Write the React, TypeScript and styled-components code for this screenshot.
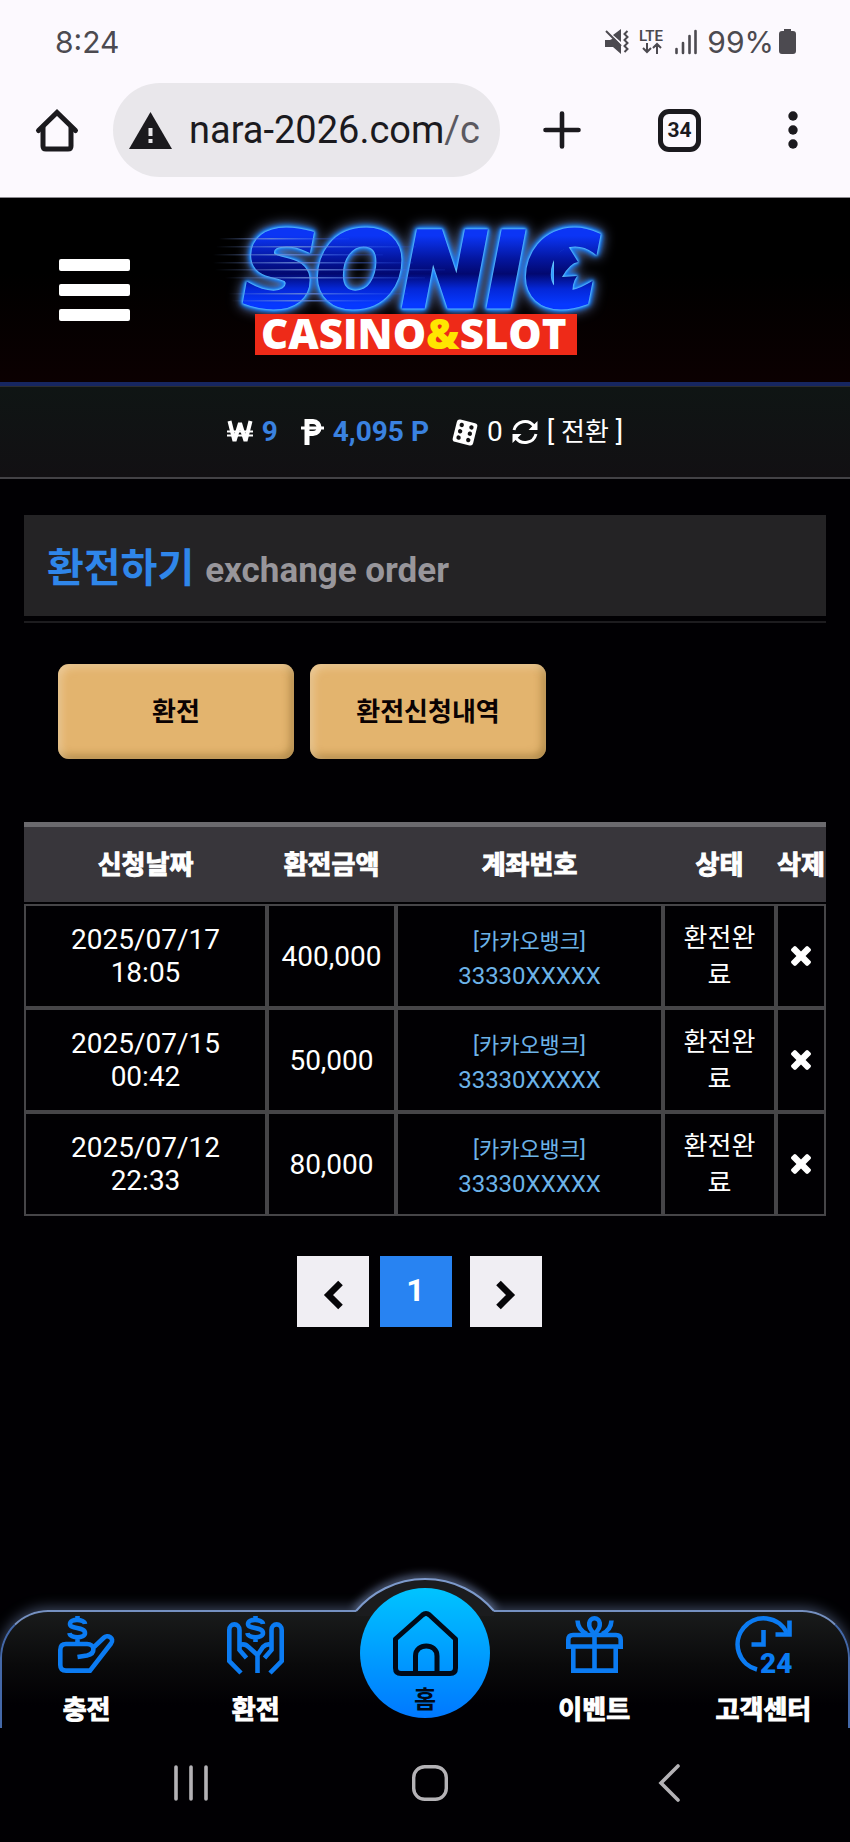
import React from "react";
import styled, { createGlobalStyle } from "styled-components";

const GlobalStyle = createGlobalStyle`
  * { box-sizing: border-box; }
  body {
    margin: 0;
    background: #010003;
    color: #fff;
    font-family: Roboto, "Noto Sans CJK KR", sans-serif;
  }
  button {
    margin: 0;
    padding: 0;
    border: 0;
    background: none;
    color: inherit;
    font: inherit;
    cursor: pointer;
  }
  a { color: inherit; text-decoration: none; }
  svg { display: block; flex: none; overflow: visible; }
`;

const Page = styled.div`
  display: flex;
  flex-direction: column;
  min-height: 100vh;
`;

/* Phone status bar and browser toolbar */

const BrowserTop = styled.header`
  background: #fcf9fe;
  border-bottom: 1px solid #8d8b90;
  color: #1b1a1e;
`;

const StatusBar = styled.div`
  display: flex;
  align-items: center;
  justify-content: space-between;
  height: 83px;
  padding: 0 54px 0 55px;
  color: #4c4a50;
  font-family: Inter, Roboto, sans-serif;
  font-size: 30px;
  line-height: 36px;
`;

const StatusIcons = styled.div`
  display: flex;
  align-items: center;
  gap: 10px;
`;

const BatteryStatus = styled.div`
  display: flex;
  align-items: center;
  gap: 5px;
`;

const Toolbar = styled.div`
  display: flex;
  align-items: center;
  padding-bottom: 20px;
`;

const ToolButton = styled.button<{ $width: number }>`
  display: flex;
  align-items: center;
  justify-content: center;
  flex: none;
  width: ${(p) => p.$width}px;
  height: 94px;
`;

const AddressBar = styled.button`
  display: flex;
  align-items: center;
  gap: 17px;
  flex: 1;
  min-width: 0;
  height: 94px;
  padding: 0 16px;
  border-radius: 47px;
  background: #e9e7eb;
  font-size: 38px;
  line-height: 46px;
  white-space: nowrap;
`;

const UrlPath = styled.span`
  color: #5b5960;
`;

const TabCount = styled.span`
  display: flex;
  align-items: center;
  justify-content: center;
  width: 43px;
  height: 43px;
  border: 5px solid #1b1a1e;
  border-radius: 11px;
  font-size: 21px;
  font-weight: 700;
  line-height: 24px;
`;

/* Site header */

const SiteHeader = styled.div`
  display: grid;
  grid-template-columns: 1fr 420px 1fr;
  align-items: center;
  height: 188px;
  border-bottom: 4px solid #162660;
  background: linear-gradient(#000 40%, #0b0001);
`;

const MenuButton = styled.button`
  display: flex;
  flex-direction: column;
  gap: 13px;
  width: 71px;
  margin-left: 59px;
`;

const MenuLine = styled.span`
  height: 12px;
  border-radius: 2px;
  background: #fff;
`;

const NeonGroup = styled.g`
  filter: drop-shadow(0 0 1px #7fd8ff) drop-shadow(0 0 1px #4fb8ff)
    drop-shadow(0 0 2px #0a78ff) drop-shadow(0 0 2px #0a6cf0)
    drop-shadow(0 0 6px rgba(150, 180, 255, 0.7));
`;

const LogoWord = styled.text`
  font-family: "DejaVu Sans", sans-serif;
  font-size: 101px;
  font-style: italic;
  font-weight: 700;
`;

const InfoBar = styled.div`
  display: flex;
  align-items: center;
  justify-content: center;
  gap: 23px;
  height: 93px;
  border-top: 1px solid #2b2d30;
  border-bottom: 2px solid #434246;
  background: linear-gradient(#0f1514, #121013);
  font-size: 28px;
  line-height: 34px;
`;

const InfoGroup = styled.div`
  display: flex;
  align-items: center;
  gap: 9px;
`;

const Amount = styled.strong`
  color: #3a82e0;
`;

const ConvertButton = styled.button`
  display: flex;
  align-items: center;
  gap: 9px;
`;

const KoreanText = styled.span`
  font-size: 26px;
`;

/* Main content */

const Main = styled.main`
  flex: 1;
  padding: 36px 24px 48px;
`;

const TitleBlock = styled.div`
  padding-bottom: 5px;
  border-bottom: 2px solid #1d1c1f;
`;

const Title = styled.h1`
  display: flex;
  align-items: baseline;
  gap: 11px;
  height: 101px;
  margin: 0;
  padding: 24px 23px 0;
  background: #242325;
  color: #2f86ea;
  font-size: 40px;
  font-weight: 700;
  line-height: 60px;
`;

const Subtitle = styled.span`
  color: #98969b;
  font-size: 35px;
`;

const ActionRow = styled.div`
  display: flex;
  gap: 16px;
  padding: 41px 34px 63px;
`;

const ActionButton = styled.button`
  width: 236px;
  height: 95px;
  padding-bottom: 4px;
  border-radius: 11px;
  background: #e3b46e;
  box-shadow: inset 3px 3px 8px rgba(255, 235, 205, 0.5),
    inset -3px -3px 8px rgba(110, 80, 20, 0.5);
  color: #0a0203;
  font-size: 26px;
  font-weight: 700;
`;

const HistoryTable = styled.table`
  width: 100%;
  table-layout: fixed;
  border-collapse: separate;
  border-spacing: 0;
  text-align: center;
`;

const Column = styled.col<{ $width?: number }>`
  width: ${(p) => (p.$width ? `${p.$width}px` : "auto")};
`;

const HeadCell = styled.th`
  height: 82px;
  padding: 0 0 4px;
  border-top: 5px solid #6b6a6e;
  border-bottom: 2px solid #010003;
  background: #38363b;
  font-size: 26px;
  font-weight: 700;
  white-space: nowrap;
  -webkit-text-stroke: 1px #fff;
`;

const Cell = styled.td`
  height: 104px;
  padding: 0;
  border: 2px solid #464548;
  font-size: 28px;
  line-height: 33px;
`;

const StateCell = styled(Cell)`
  padding: 2px 14px 0;
  font-size: 26px;
  line-height: 37px;
  word-break: break-all;
`;

const DateText = styled.time`
  display: block;
  width: 160px;
  margin: 0 auto;
`;

const Account = styled.div`
  padding-top: 6px;
  color: #6cb3e8;
  font-size: 24px;
  line-height: 34px;
`;

const Bank = styled.div`
  font-size: 22px;
`;

const DeleteButton = styled.button`
  display: flex;
  align-items: center;
  justify-content: center;
  width: 100%;
  height: 60px;
`;

const Pagination = styled.nav`
  display: flex;
  justify-content: center;
  padding: 40px 12px 0 0;
`;

const PageButton = styled.button<{ $current?: boolean }>`
  display: flex;
  align-items: center;
  justify-content: center;
  width: 72px;
  height: 71px;
  background: ${(p) => (p.$current ? "#2883f2" : "#f0eef3")};
  color: ${(p) => (p.$current ? "#fff" : "#060508")};
  font-size: 32px;
  font-weight: 700;
  line-height: 38px;
  margin: ${(p) => (p.$current ? "0 18px 0 11px" : "0")};
  padding: ${(p) => (p.$current ? "0 0 4px" : "6px 0 0")};
`;

/* Bottom navigation */

const BottomNav = styled.nav`
  position: relative;
  display: grid;
  grid-template-columns: repeat(5, 1fr);
  height: 118px;
  border: 2px solid #4468a8;
  border-top-color: #7590c0;
  border-bottom: 0;
  border-radius: 48px 48px 0 0;
  background: linear-gradient(#191b1b, #0a0a0b 45%, #010003 80%);
  box-shadow: 0 -2px 14px rgba(140, 165, 215, 0.45);
`;

const NavItem = styled.a`
  display: flex;
  flex-direction: column;
  align-items: center;
  gap: 18px;
  padding-top: 4px;
  font-size: 26px;
  font-weight: 700;
  line-height: 38px;
  white-space: nowrap;
  -webkit-text-stroke: 1px #fff;
`;

const Bump = styled.svg`
  position: absolute;
  top: -48px;
  left: 50%;
  margin-left: -90px;
`;

const HomeLink = styled.a`
  position: absolute;
  top: -24px;
  left: 50%;
  display: flex;
  flex-direction: column;
  align-items: center;
  gap: 6px;
  width: 130px;
  height: 130px;
  margin-left: -65px;
  padding-top: 23px;
  border-radius: 50%;
  background: linear-gradient(#00c4ff, #0078ff);
  color: #000a18;
  font-size: 24px;
  font-weight: 700;
  line-height: 36px;
`;

const SystemNav = styled.footer`
  position: relative;
  display: flex;
  justify-content: center;
  gap: 82px;
  height: 114px;
  padding: 27px 0 0 10px;
  background: #010003;
`;

const SystemButton = styled.button`
  display: flex;
  align-items: center;
  justify-content: center;
  width: 157px;
  height: 56px;
`;

const SilentIcon = () => (
  <svg width="25" height="25" viewBox="0 0 25 25" aria-hidden="true">
    <path d="M1 11h5l4-2 7 7v9l-8-7H1Z M9 6l8-6v13z" fill="#4c4a50" />
    <path d="M2 2 17 17" stroke="#4c4a50" strokeWidth="2" />
    <path d="M23.500 2l-3 3 3 3-3 3 3 3-3 3 3 3-3 3" fill="none" stroke="#4c4a50" strokeWidth="2" />
  </svg>
);

const LteIcon = () => (
  <svg width="26" height="27" viewBox="0 0 26 27" aria-label="LTE">
    <text x="0" y="13" fontFamily="Roboto, sans-serif" fontSize="15" fontWeight="600" fill="#4c4a50">LTE</text>
    <path d="M8 15v9M4 20l4 4 4-4M18 26v-9M14 20l4-4 4 4" fill="none" stroke="#4c4a50" strokeWidth="2" />
  </svg>
);

const SignalIcon = () => (
  <svg width="22" height="24" viewBox="0 0 22 24" aria-hidden="true">
    <path d="M1.500 19v4M8 13v10M14.500 6v17M20.500 1v22" stroke="#4c4a50" strokeWidth="2.600" strokeLinecap="round" />
  </svg>
);

const BatteryIcon = () => (
  <svg width="17" height="25" viewBox="0 0 17 25" aria-hidden="true">
    <path d="M5 0h7v2h2q3 0 3 3v17q0 3-3 3H3q-3 0-3-3V5q0-3 3-3h2z" fill="#4c4a50" />
  </svg>
);

const ToolbarHomeIcon = () => (
  <svg width="42" height="43" viewBox="0 0 42 43" fill="none" stroke="#1b1a1e" strokeWidth="5" aria-hidden="true">
    <path d="M2.500 21.500 21 3.500 39.500 21.500" strokeLinecap="round" />
    <path d="M7 18v19q0 3 3 3h22q3 0 3-3V18" />
  </svg>
);

const WarningIcon = () => (
  <svg width="43" height="37" viewBox="0 0 43 37" aria-hidden="true">
    <path d="M21.500 0 43 37H0Z" fill="#1b1a1e" />
    <path d="M21.500 16v8M21.500 27v4" stroke="#e9e7eb" strokeWidth="4" />
  </svg>
);

const PlusIcon = () => (
  <svg width="38" height="38" viewBox="0 0 38 38" aria-hidden="true">
    <path d="M19 2.500v33M2.500 19h33" stroke="#1b1a1e" strokeWidth="4.600" strokeLinecap="round" />
  </svg>
);

const DotsIcon = () => (
  <svg width="10" height="38" viewBox="0 0 10 38" fill="#1b1a1e" aria-hidden="true">
    <circle cx="5" cy="5" r="4.700" />
    <circle cx="5" cy="19" r="4.700" />
    <circle cx="5" cy="33" r="4.700" />
  </svg>
);

const Logo = () => (
  <svg width="420" height="184" viewBox="215 198 420 184" role="img" aria-label="SONIC CASINO&SLOT">
    <defs>
      <linearGradient id="letter" gradientUnits="userSpaceOnUse" x1="0" y1="232" x2="0" y2="308">
        <stop offset="0.05" stopColor="#0b35f5" />
        <stop offset="0.35" stopColor="#0416a0" />
        <stop offset="0.55" stopColor="#020870" />
        <stop offset="0.75" stopColor="#0427d8" />
        <stop offset="0.95" stopColor="#0638ff" />
      </linearGradient>
      <linearGradient id="streak" x1="0" x2="1">
        <stop offset="0" stopColor="#6f8fd8" stopOpacity="0" />
        <stop offset="0.4" stopColor="#6f8fd8" stopOpacity="0.8" />
        <stop offset="1" stopColor="#3060ff" stopOpacity="0.1" />
      </linearGradient>
    </defs>
    <NeonGroup fill="url(#letter)">
      <LogoWord x="244" y="306" stroke="url(#letter)" strokeWidth="5">SONIC</LogoWord>
      <path d="M568 246 578 262Q570 263 562 277L577 276Q571 284 573 296L554 292V256Z" />
    </NeonGroup>
    <g fill="url(#streak)">
      <rect x="219" y="238" width="130" height="1.500" />
      <rect x="216" y="246" width="200" height="1.500" />
      <rect x="213" y="254" width="170" height="1.500" />
      <rect x="213" y="262" width="200" height="1.500" />
      <rect x="215" y="269" width="230" height="1.500" />
      <rect x="225" y="277" width="200" height="1.500" />
      <rect x="228" y="293" width="180" height="1.500" />
      <rect x="231" y="300" width="160" height="1.500" />
    </g>
    <rect x="255" y="314" width="322" height="41" fill="#ee2a18" />
    <text x="261" y="349" fontFamily="'Open Sans', sans-serif" fontWeight="800" fontSize="42" fill="#fff">
      CASINO<tspan fill="#ffe600">&amp;</tspan>SLOT
    </text>
  </svg>
);

const WonIcon = () => (
  <svg width="26" height="22" viewBox="0 0 26 22" fill="none" stroke="#fff" aria-hidden="true">
    <path d="M2.500 0 7.500 20 13 2 18.500 20 23.500 0" strokeWidth="4" strokeLinejoin="bevel" />
    <path d="M0 10.500h26M0 14.500h26" strokeWidth="2" />
  </svg>
);

const PointIcon = () => (
  <svg width="23" height="26" viewBox="0 0 23 26" fill="none" stroke="#fff" aria-hidden="true">
    <path d="M6 26V2.500h6c8 0 8 12 0 12H6" strokeWidth="5" />
    <path d="M0 9h23" strokeWidth="3" />
  </svg>
);

const DiceIcon = () => (
  <svg width="26" height="27" viewBox="0 0 26 27" aria-hidden="true">
    <g transform="rotate(14 13 13.500)">
      <rect x="2.500" y="2" width="21" height="23" rx="3" fill="#fff" />
      <g fill="#121213">
        <circle cx="8" cy="7" r="2.200" />
        <circle cx="8" cy="13.500" r="2.200" />
        <circle cx="8" cy="20" r="2.200" />
        <circle cx="18" cy="7" r="2.200" />
        <circle cx="18" cy="13.500" r="2.200" />
        <circle cx="18" cy="20" r="2.200" />
      </g>
    </g>
  </svg>
);

const RefreshIcon = () => (
  <svg width="26" height="26" viewBox="0 0 26 26" aria-hidden="true">
    <path d="M2 11A11.300 11.300 0 0 1 22 7M24 15A11.300 11.300 0 0 1 4 19" fill="none" stroke="#fff" strokeWidth="3" />
    <path d="M25.500 2v9h-9zM.5 24v-9h9z" fill="#fff" />
  </svg>
);

const CrossIcon = () => (
  <svg width="20" height="20" viewBox="302 366 1188 1188" fill="#fff" aria-hidden="true">
    <path d="M1490 1322q0 40-28 68l-136 136q-28 28-68 28t-68-28l-294-294-294 294q-28 28-68 28t-68-28l-136-136q-28-28-28-68t28-68l294-294-294-294q-28-28-28-68t28-68l136-136q28-28 68-28t68 28l294 294 294-294q28-28 68-28t68 28l136 136q28 28 28 68t-28 68l-294 294 294 294q28 28 28 68z" />
  </svg>
);

const ArrowIcon = ({ next }: { next?: boolean }) => (
  <svg width="20" height="30" viewBox="0 0 20 30" fill="none" stroke="#060508" strokeWidth="6.500" aria-hidden="true">
    <path d={next ? "M2.500 3 14.500 15 2.500 27" : "M17.500 3 5.500 15 17.500 27"} />
  </svg>
);

const NavIcon = ({ label, children }: { label?: string; children: React.ReactNode }) => (
  <svg width="57" height="57" viewBox="0 0 57 57" fill="none" stroke="#0b7bf2" strokeWidth="4.600" aria-label={label}>
    {children}
  </svg>
);

const DepositIcon = () => (
  <NavIcon>
    <path d="M27 8C26.500 3 12 2 12 8C12 13.500 27 10.500 27 17C27 23 12 22.500 11.500 17M19.500 0v4M19.500 21v7" />
    <path d="M19.500 41 29 39.500C38 37.500 37 28 29 28H8Q2.300 28 2.300 34V49Q2.300 54.600 8 54.600H32L53 27.500C57 22 49.500 18 45.500 22L35.500 31.500" />
  </NavIcon>
);

const WithdrawIcon = () => (
  <NavIcon>
    <path d="M36 8C35.500 3 21 2 21 8C21 13.500 36 10.500 36 17C36 23 21 22.500 20.500 17M28.500 0v4M28.500 21v5" />
    <path d="M14 57 2.300 45V14C2.300 6.500 12.500 6.500 12.500 14V34L19.500 42" />
    <path d="M43 57 54.700 45V14C54.700 6.500 44.500 6.500 44.500 14V34L37.500 42" />
    <path d="M12.500 29Q18 27 21.500 31L30.500 39V57M30.500 39 36 31Q40 27 44.500 29" />
  </NavIcon>
);

const GiftIcon = () => (
  <NavIcon>
    <path d="M2.300 33V24Q2.300 19 7 19H50Q54.700 19 54.700 24V33M0 30.500H57M7.300 31V54.600H49.700V31M28.500 19V55" />
    <path d="M28.500 18C20 10 23 2.300 28.500 2.300S37 10 28.500 18M11.500 4.500Q12 14 21 18M45.500 4.500Q45 14 36 18" />
  </NavIcon>
);

const SupportIcon = () => (
  <NavIcon label="24">
    <path d="M22 53.500A26 26 0 1 1 52 17" />
    <path d="M54.500 4.500V18.500H40.500M28.500 14V28.500H16.500" />
    <text x="25" y="57" fontFamily="Roboto, sans-serif" fontWeight="900" fontSize="28" fill="#0b7bf2" stroke="none">24</text>
  </NavIcon>
);

const HomeIcon = () => (
  <svg width="65" height="65" viewBox="0 0 65 65" fill="none" stroke="#000a18" strokeWidth="5" strokeLinejoin="round" aria-hidden="true">
    <path d="M29.500 4Q33 1 36.500 4L62.500 28V57Q62.500 62.500 57 62.500H8Q2.500 62.500 2.500 57V28Z" />
    <path d="M22.500 62V45C22.500 31.500 44 31.500 44 45V62" />
  </svg>
);

const HomeBump = () => (
  <Bump width="180" height="52" viewBox="0 0 180 52" aria-hidden="true">
    <defs>
      <filter id="bumpGlow" x="-20%" y="-40%" width="140%" height="180%">
        <feGaussianBlur stdDeviation="4" />
      </filter>
      <clipPath id="bumpClip">
        <rect width="180" height="46" />
      </clipPath>
    </defs>
    <g clipPath="url(#bumpClip)">
      <path d="M21 47A90.500 90.500 0 0 1 159 47" fill="none" stroke="#8fa9dc" strokeOpacity="0.6" strokeWidth="8" filter="url(#bumpGlow)" />
    </g>
    <path d="M21 47A90.500 90.500 0 0 1 159 47V52H21Z" fill="#1b1c1e" />
    <path d="M21 47A90.500 90.500 0 0 1 159 47" fill="none" stroke="#7d9acb" strokeWidth="2" />
  </Bump>
);

const history = [
  { date: "2025/07/17 18:05", amount: "400,000" },
  { date: "2025/07/15 00:42", amount: "50,000" },
  { date: "2025/07/12 22:33", amount: "80,000" },
];

export default function App() {
  return (
    <Page>
      <GlobalStyle />
      <BrowserTop>
        <StatusBar>
          <span>8:24</span>
          <StatusIcons>
            <SilentIcon />
            <LteIcon />
            <SignalIcon />
            <BatteryStatus>
              <span>99%</span>
              <BatteryIcon />
            </BatteryStatus>
          </StatusIcons>
        </StatusBar>
        <Toolbar>
          <ToolButton $width={113} aria-label="Home"><ToolbarHomeIcon /></ToolButton>
          <AddressBar>
            <WarningIcon />
            <span>nara-2026.com<UrlPath>/c</UrlPath></span>
          </AddressBar>
          <ToolButton $width={124} aria-label="New tab"><PlusIcon /></ToolButton>
          <ToolButton $width={111} aria-label="Tabs"><TabCount>34</TabCount></ToolButton>
          <ToolButton $width={115} aria-label="More"><DotsIcon /></ToolButton>
        </Toolbar>
      </BrowserTop>

      <SiteHeader>
        <MenuButton aria-label="Menu">
          <MenuLine />
          <MenuLine />
          <MenuLine />
        </MenuButton>
        <Logo />
      </SiteHeader>

      <InfoBar>
        <InfoGroup><WonIcon /><Amount>9</Amount></InfoGroup>
        <InfoGroup><PointIcon /><Amount>4,095 P</Amount></InfoGroup>
        <InfoGroup>
          <DiceIcon />
          <span>0</span>
          <ConvertButton>
            <RefreshIcon />
            <span>[ <KoreanText>전환</KoreanText> ]</span>
          </ConvertButton>
        </InfoGroup>
      </InfoBar>

      <Main>
        <TitleBlock>
          <Title>환전하기<Subtitle>exchange order</Subtitle></Title>
        </TitleBlock>
        <ActionRow>
          <ActionButton>환전</ActionButton>
          <ActionButton>환전신청내역</ActionButton>
        </ActionRow>

        <HistoryTable>
          <colgroup>
            <Column $width={243} />
            <Column $width={129} />
            <Column />
            <Column $width={113} />
            <Column $width={50} />
          </colgroup>
          <thead>
            <tr>
              <HeadCell>신청날짜</HeadCell>
              <HeadCell>환전금액</HeadCell>
              <HeadCell>계좌번호</HeadCell>
              <HeadCell>상태</HeadCell>
              <HeadCell>삭제</HeadCell>
            </tr>
          </thead>
          <tbody>
            {history.map((row) => (
              <tr key={row.date}>
                <Cell><DateText>{row.date}</DateText></Cell>
                <Cell>{row.amount}</Cell>
                <Cell>
                  <Account>
                    <Bank>[카카오뱅크]</Bank>
                    33330XXXXX
                  </Account>
                </Cell>
                <StateCell>환전완료</StateCell>
                <Cell><DeleteButton aria-label="삭제"><CrossIcon /></DeleteButton></Cell>
              </tr>
            ))}
          </tbody>
        </HistoryTable>

        <Pagination>
          <PageButton aria-label="이전"><ArrowIcon /></PageButton>
          <PageButton $current aria-current="page">1</PageButton>
          <PageButton aria-label="다음"><ArrowIcon next /></PageButton>
        </Pagination>
      </Main>

      <BottomNav>
        <NavItem href="#deposit"><DepositIcon />충전</NavItem>
        <NavItem href="#withdraw"><WithdrawIcon />환전</NavItem>
        <span />
        <NavItem href="#event"><GiftIcon />이벤트</NavItem>
        <NavItem href="#support"><SupportIcon />고객센터</NavItem>
        <HomeBump />
        <HomeLink href="#home"><HomeIcon />홈</HomeLink>
      </BottomNav>

      <SystemNav>
        <SystemButton aria-label="Recent apps">
          <svg width="36" height="36" viewBox="0 0 36 36">
            <path d="M3 2v32M18 2v32M33 2v32" stroke="#b4b2b6" strokeWidth="3.600" strokeLinecap="round" />
          </svg>
        </SystemButton>
        <SystemButton aria-label="Home screen">
          <svg width="36" height="36" viewBox="0 0 36 36">
            <rect x="1.700" y="1.700" width="32.600" height="32.600" rx="11" fill="none" stroke="#b4b2b6" strokeWidth="3.400" />
          </svg>
        </SystemButton>
        <SystemButton aria-label="Back">
          <svg width="22" height="38" viewBox="0 0 22 38">
            <path d="M20 2 3 19 20 36" fill="none" stroke="#b4b2b6" strokeWidth="3.600" strokeLinecap="round" />
          </svg>
        </SystemButton>
      </SystemNav>
    </Page>
  );
}
